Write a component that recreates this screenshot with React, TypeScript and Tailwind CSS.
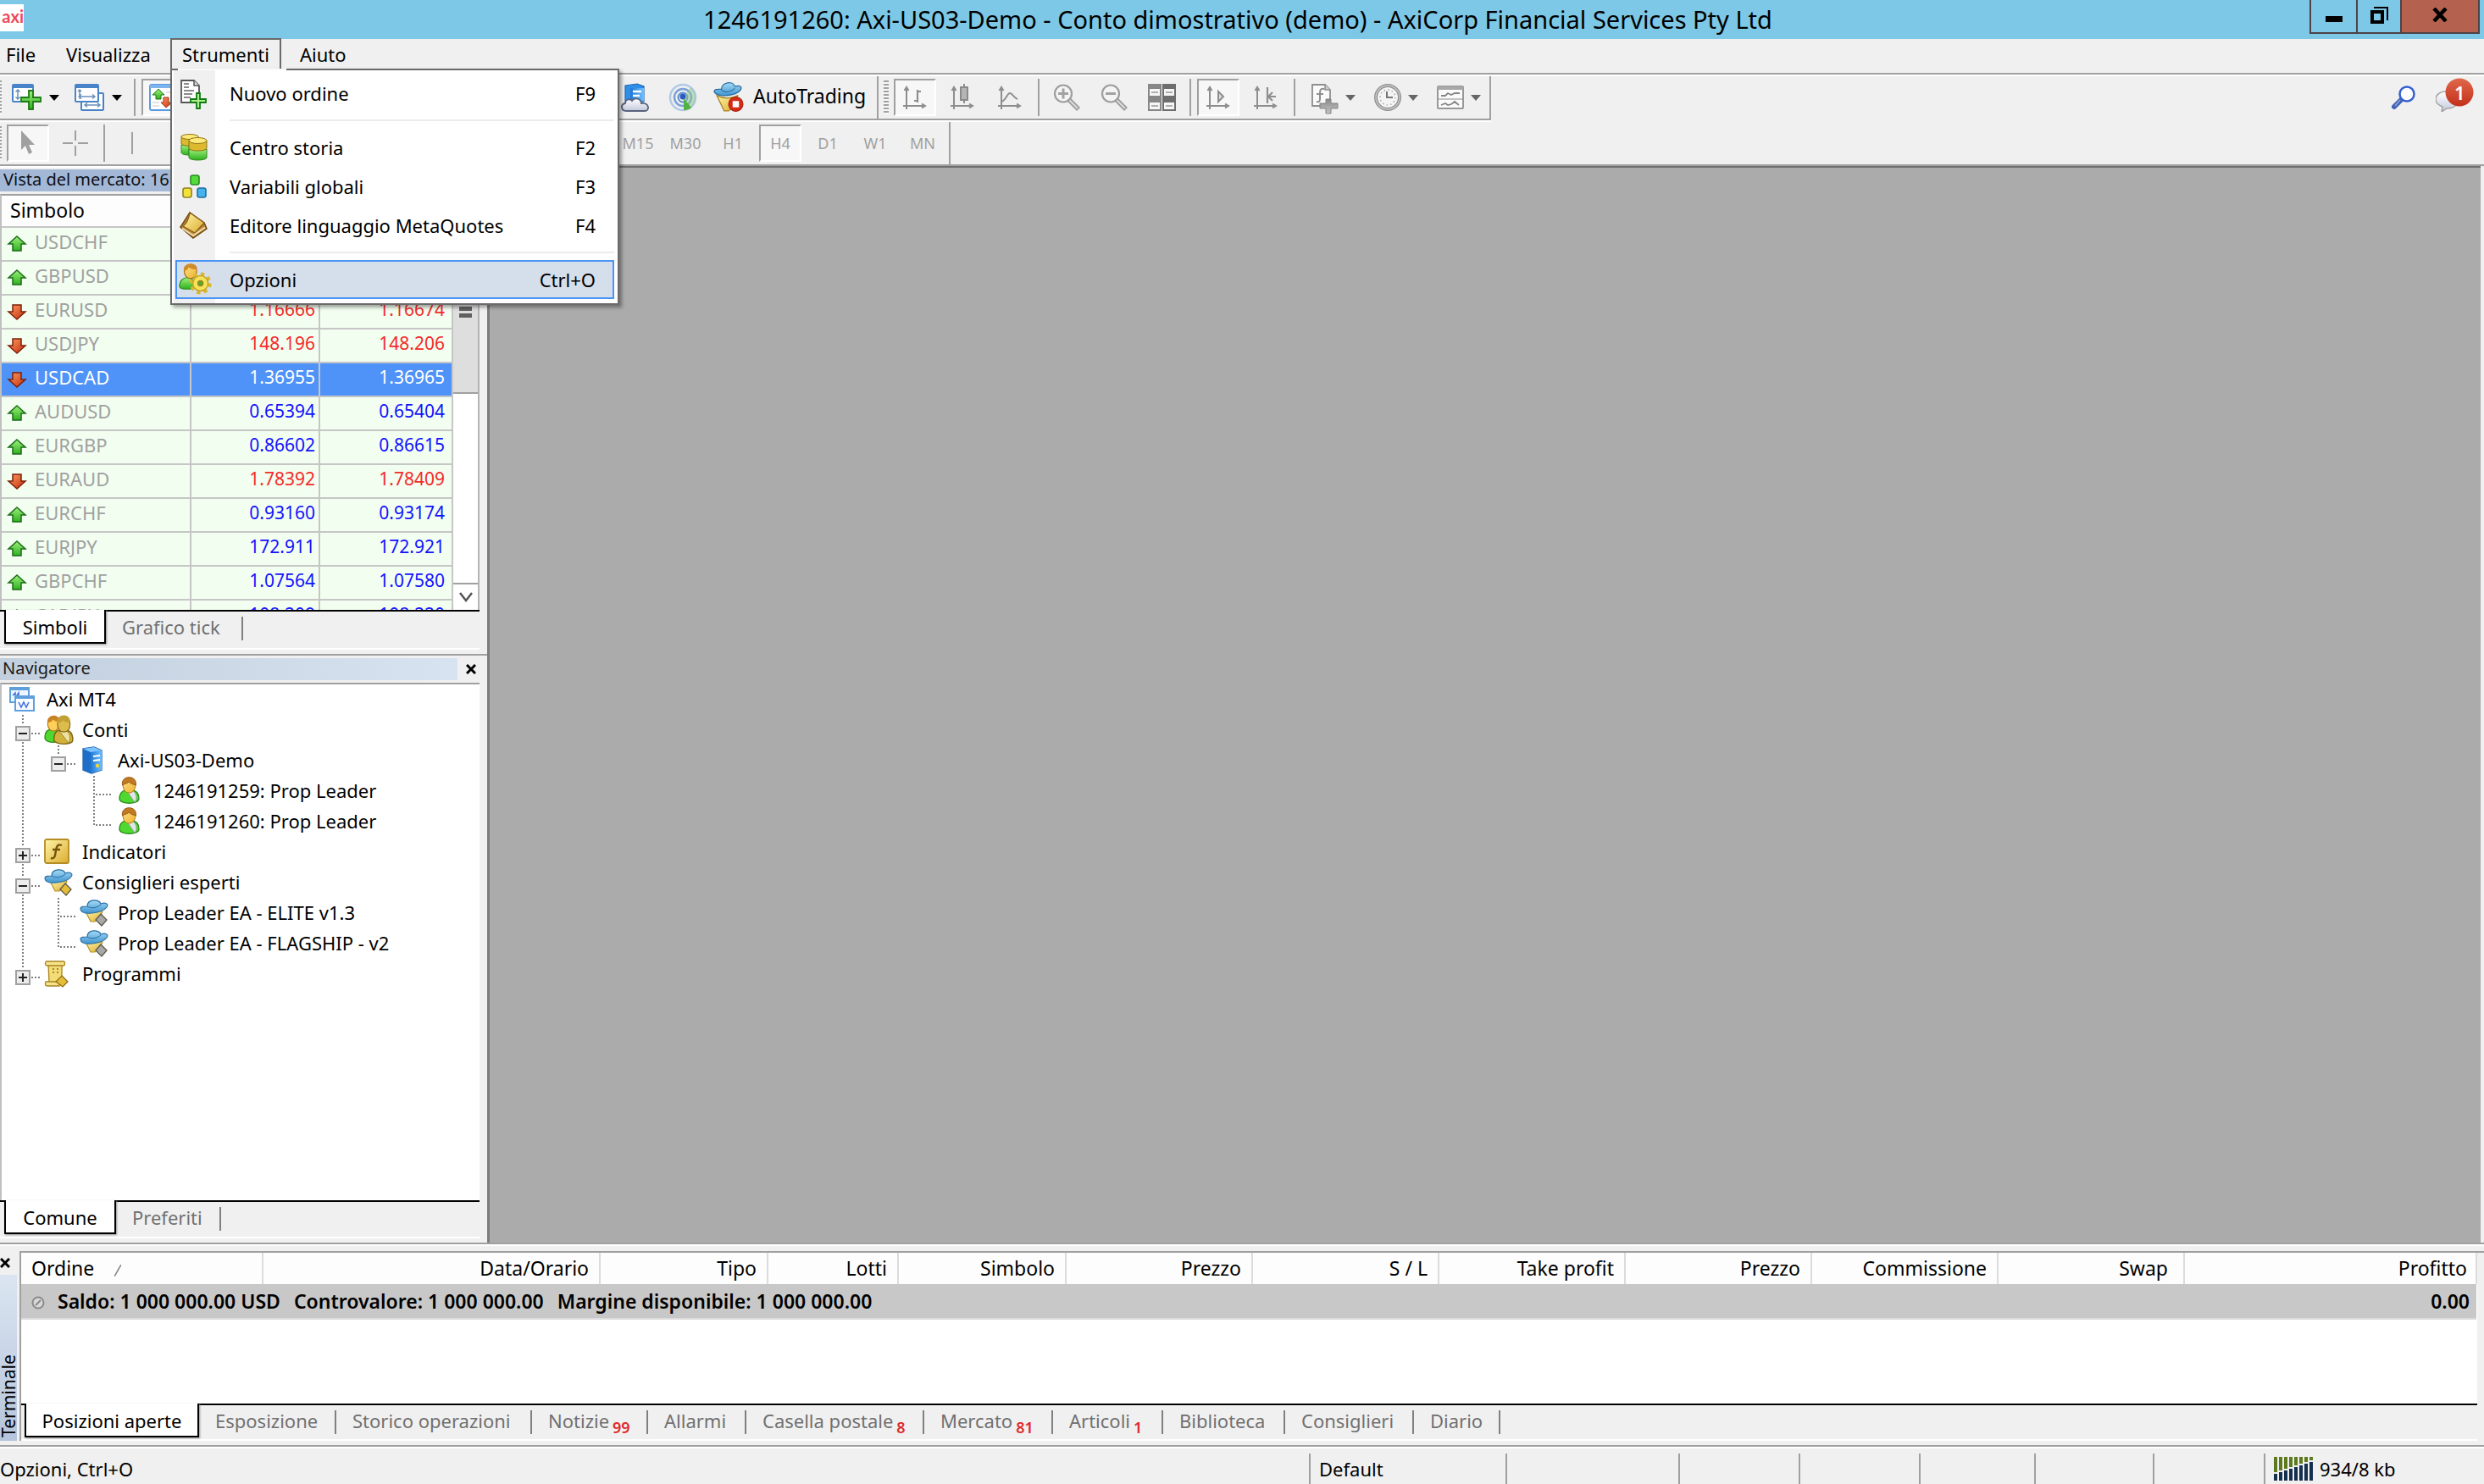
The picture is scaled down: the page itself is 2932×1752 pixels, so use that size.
import type { ReactNode } from "react";

/* ---------- icons ---------- */

function Icon({ children, className = "size-8" }: { children: ReactNode; className?: string }) {
  return (
    <svg viewBox="0 0 32 32" className={`${className} shrink-0 overflow-visible`} aria-hidden="true">
      {children}
    </svg>
  );
}

function Gradients() {
  return (
    <svg className="absolute size-0" aria-hidden="true">
      <defs>
        <linearGradient id="green" x1="0" y1="0" x2="0" y2="1">
          <stop offset="0" stopColor="#9cf07c" />
          <stop offset="1" stopColor="#2fb01f" />
        </linearGradient>
        <linearGradient id="red" x1="0" y1="0" x2="1" y2="1">
          <stop offset="0" stopColor="#ff9a63" />
          <stop offset="1" stopColor="#c22f0c" />
        </linearGradient>
        <linearGradient id="gold" x1="0" y1="0" x2="1" y2="1">
          <stop offset="0" stopColor="#fff6a8" />
          <stop offset="1" stopColor="#dcab30" />
        </linearGradient>
        <linearGradient id="hat" x1="0" y1="0" x2="0" y2="1">
          <stop offset="0" stopColor="#a5daf6" />
          <stop offset="1" stopColor="#3f94cf" />
        </linearGradient>
        <linearGradient id="blue" x1="0" y1="0" x2="1" y2="0">
          <stop offset="0" stopColor="#1f78d6" />
          <stop offset="1" stopColor="#6fc0ff" />
        </linearGradient>
        <linearGradient id="skin" x1="0" y1="0" x2="1" y2="1">
          <stop offset="0" stopColor="#ffe08a" />
          <stop offset="1" stopColor="#eeb32c" />
        </linearGradient>
        <linearGradient id="gray" x1="0" y1="0" x2="0" y2="1">
          <stop offset="0" stopColor="#8a8a8a" />
          <stop offset="1" stopColor="#c4c4c4" />
        </linearGradient>
        <linearGradient id="cloud" x1="0" y1="0" x2="0" y2="1">
          <stop offset="0" stopColor="#ffffff" />
          <stop offset="1" stopColor="#c3c9dc" />
        </linearGradient>
        <linearGradient id="badge" x1="0" y1="0" x2="0" y2="1">
          <stop offset="0" stopColor="#e0684a" />
          <stop offset="1" stopColor="#c3301a" />
        </linearGradient>
      </defs>
    </svg>
  );
}

const NewChartIcon = () => (
  <Icon className="h-8 w-9">
    <rect x="-1" y="1" width="24" height="20" rx="1" fill="#fff" stroke="#4a84c8" strokeWidth="2" />
    <path d="M-1 3h24" stroke="#4a84c8" strokeWidth="4" />
    <path d="M5 7v11M2.500 9.500 5 7l2.500 2.500M2.500 15.500 5 18l2.500-2.500" stroke="#6c8fba" strokeWidth="1.500" fill="none" />
    <path d="M18 8h5v8h9v5h-9v9h-5v-9H9v-5h9z" fill="url(#green)" stroke="#1d7a16" strokeWidth="1.800" />
  </Icon>
);

const ProfilesIcon = () => (
  <Icon className="h-8 w-9">
    <rect x="6" y="11" width="26" height="20" rx="1" fill="#fff" stroke="#4a84c8" strokeWidth="2" />
    <rect x="-1" y="1" width="27" height="20" rx="1" fill="#fff" stroke="#4a84c8" strokeWidth="2" />
    <path d="M-1 3h27" stroke="#4a84c8" strokeWidth="4" />
    <path d="M4 7v11M2 9l2-2 2 2M3 15h19M19 12.500 22 15l-3 2.500M6 12.500 3 15l3 2.500M10 25h18M13 22.500 10 25l3 2.500M25 22.500 28 25l-3 2.500" stroke="#6c8fba" strokeWidth="1.500" fill="none" />
  </Icon>
);

const MarketWatchIcon = () => (
  <Icon>
    <rect x="1" y="1" width="30" height="30" rx="2" fill="#fff" stroke="#5a9be0" strokeWidth="2" />
    <path d="M1 3h30" stroke="#7db4ee" strokeWidth="4" />
    <path d="M11 6l7 7h-4v5H8v-5H4z" fill="url(#green)" stroke="#1d7a16" />
    <path d="M17 16h6v6h4l-7 6-6-6h3z" fill="url(#red)" stroke="#a63214" />
    <path d="M4 22h8M4 26h8M20 10h7" stroke="#c8c8c8" />
  </Icon>
);

const NewOrderIcon = () => (
  <Icon>
    <path d="M1 1h15l6 6v20H1z" fill="#fff" stroke="#555" strokeWidth="1.800" />
    <path d="M16 1v6h6" fill="#ddd" stroke="#555" strokeWidth="1.500" />
    <path d="M4 5h6M4 9h6M4 13h12M4 17h10M4 21h8" stroke="#666" strokeWidth="1.600" />
    <path d="M19 16h4v7h7v4h-7v7h-4v-7h-7v-4h7z" fill="#a8f08c" stroke="#137a13" strokeWidth="1.800" />
  </Icon>
);

const HistoryIcon = () => (
  <Icon>
    <path d="M1 13v9c0 2 4 3 9 3V13z" fill="url(#green)" stroke="#2f8a1c" />
    <path d="M1 3v9c2 2 6 2 10 2l10-8V3z" fill="#dcb92f" stroke="#8e7416" />
    <ellipse cx="11" cy="3.500" rx="10" ry="3" fill="#ffe978" stroke="#8e7416" />
    <path d="M10 18v10c0 4 21 4 21 0V18z" fill="url(#green)" stroke="#2f8a1c" />
    <path d="M10 8v9c0 4 21 4 21 0V8z" fill="#dcb92f" stroke="#8e7416" />
    <ellipse cx="20.500" cy="8" rx="10.500" ry="3.500" fill="#ffe978" stroke="#8e7416" />
  </Icon>
);

const GlobalsIcon = () => (
  <Icon>
    <rect x="12" y="3" width="10" height="11" rx="2.500" fill="#52dc3a" stroke="#2a8a22" strokeWidth="1.600" />
    <rect x="3" y="18" width="10" height="11" rx="2.500" fill="#f4e23c" stroke="#8e8420" strokeWidth="1.600" />
    <rect x="20" y="18" width="10" height="11" rx="2.500" fill="#45b4ee" stroke="#1f6f9e" strokeWidth="1.600" />
  </Icon>
);

const EditorIcon = () => (
  <Icon>
    <path d="M11 1 0 18l15 13 16-11-3-7z" fill="#b98534" stroke="#70480f" strokeWidth="1.500" />
    <path d="M11 1 28 13 17 25 3 17c4-3 7-9 8-16z" fill="url(#gold)" stroke="#8a5f18" strokeWidth="1.300" />
    <path d="M2 19.500 15 28l14-9.500" fill="none" stroke="#f0dfb0" strokeWidth="2" />
  </Icon>
);

const OptionsIcon = () => (
  <Icon className="size-9">
    <path d="M-1 23c0-6 4-9 8-9s8 2 8 9c0 4-16 4-16 0z" fill="url(#green)" stroke="#2f8a1c" />
    <path d="M4 7c0-9 13-9 13 0 0 5-3 8-6.500 8S4 12 4 7z" fill="url(#skin)" stroke="#a86a10" />
    <path d="M3.500 7C2-3 18-3 17.500 5c-4 1-8-1-9-2-1 3-3 4-5 4z" fill="#d08c28" />
    <circle cx="21" cy="20" r="9.500" fill="none" stroke="#d9b72c" strokeWidth="4" strokeDasharray="3.700 3.760" />
    <circle cx="21" cy="20" r="8" fill="#f7e25c" stroke="#c7a422" strokeWidth="1.300" />
    <circle cx="21" cy="20" r="2.700" fill="#47b034" stroke="#9c8418" strokeWidth="1.200" />
  </Icon>
);

const CloudIcon = () => (
  <Icon>
    <path d="M4 2 18 0l8 3v18H4z" fill="#2f8ee8" stroke="#1b66b8" strokeWidth="1.200" />
    <path d="M10 5h16v15H10z" fill="url(#blue)" />
    <path d="M13 9h10M13 14h8" stroke="#fff" strokeWidth="2.500" />
    <path d="M5 32c-6 0-7-8-1-9 0-5 6-6 8-3 4-5 11-2 11 3 10-1 10 9 4 9z" fill="url(#cloud)" stroke="#59637f" strokeWidth="1.800" />
  </Icon>
);

const SignalIcon = () => (
  <Icon>
    <circle cx="16" cy="16" r="15" fill="none" stroke="#b0c9e4" strokeWidth="2.500" />
    <circle cx="16" cy="16" r="10" fill="none" stroke="#7ba2d8" strokeWidth="2.500" />
    <circle cx="16" cy="16" r="5.500" fill="none" stroke="#5c8ad0" strokeWidth="2" />
    <path d="M17 16 25 4a15 15 0 0 1-8 27z" fill="#8cc58a" opacity="0.500" />
    <path d="M17 17v14c4 0 7-1 9-3z" fill="#4fb33f" />
    <circle cx="16" cy="15" r="3.500" fill="#2a5cc0" />
  </Icon>
);

const AutoTradingIcon = () => (
  <Icon className="size-[34px]">
    <path d="M3 14c8 4 15 4 23 0l-1 9-9 8h-5z" fill="url(#gold)" stroke="#a8841c" strokeWidth="1.200" />
    <path d="M0 10c0-4 5-3 8-3 0-8 13-10 15-3 5-2 9 0 6 4-5 6-24 9-29 2z" fill="url(#hat)" stroke="#2b6fa3" strokeWidth="1.200" />
    <path d="M8 8c4 3 11 2 15-2" fill="none" stroke="#2b6fa3" />
    <circle cx="24" cy="23.500" r="8" fill="#d62c16" stroke="#a31d0c" />
    <rect x="20.500" y="20" width="7" height="7" fill="#fff" />
  </Icon>
);

const Axes = () => <path d="M6 4v26M2 26h26M3.500 8 6 4l2.500 4M24 23.500 28 26l-4 2.500" stroke="#8e8e8e" strokeWidth="2" fill="none" />;

const BarChartIcon = () => (
  <Icon>
    <Axes />
    <path d="M19 7v15M19 9h4M15 20h4" stroke="#8e8e8e" strokeWidth="2.200" fill="none" />
  </Icon>
);
const CandleIcon = () => (
  <Icon>
    <Axes />
    <path d="M18 0v23" stroke="#8e8e8e" strokeWidth="2" />
    <rect x="14" y="4" width="8" height="15" fill="#b5b5b5" stroke="#8a8a8a" strokeWidth="2" />
  </Icon>
);
const LineChartIcon = () => (
  <Icon>
    <Axes />
    <path d="M7 21c5-3 6-10 9-10s4 5 9 7" stroke="#8e8e8e" strokeWidth="2" fill="none" />
  </Icon>
);
const ZoomIcon = ({ plus }: { plus?: boolean }) => (
  <Icon>
    <path d="M18 18 30 30" stroke="#9b9b9b" strokeWidth="5.500" />
    <path d="M19 19 29 29" stroke="#dcdcdc" strokeWidth="2" />
    <circle cx="12" cy="11.500" r="10" fill="#f4f4f4" stroke="#9e9e9e" strokeWidth="2.200" />
    <path d={plus ? "M6 11.500h12M12 5.500v12" : "M6 11.500h12"} stroke="#a2a2a2" strokeWidth="3" />
  </Icon>
);
const TileIcon = () => (
  <Icon>
    {[0, 16].map((y) =>
      [0, 17].map((x) => (
        <g key={`${x}-${y}`}>
          <rect x={x} y={y} width="16" height="16" fill={x ? "#6e6e6e" : "#878787"} />
          <rect x={x + 2} y={y + 6} width="12" height="8" fill="#f6f6f6" />
          <path d={`M${x + 4} ${y + 10}h8`} stroke="#999" strokeWidth="1.500" />
        </g>
      )),
    )}
  </Icon>
);
const AutoScrollIcon = () => (
  <Icon>
    <Axes />
    <path d="M16 9v12l6-6z" stroke="#8e8e8e" strokeWidth="2" fill="#ddd" />
  </Icon>
);
const ShiftIcon = () => (
  <Icon>
    <Axes />
    <path d="M18 4v19M28 15h-9M24 10l-5 5 5 5" stroke="#8e8e8e" strokeWidth="2.200" fill="none" />
  </Icon>
);
const IndicatorAddIcon = () => (
  <Icon>
    <path d="M1 1h15l6 6v19H1z" fill="#fafafa" stroke="#8e8e8e" strokeWidth="1.800" />
    <path d="M16 1v6h6" fill="#ccc" stroke="#8e8e8e" strokeWidth="1.500" />
    <path d="M15 6c-5-1-5 2-5 6v6c0 3-1 4-4 3M6 12h8" stroke="#8e8e8e" strokeWidth="2" fill="none" />
    <path d="M17 18h6v5h8v6h-8v6h-6v-6h-7v-6h7z" fill="url(#gray)" stroke="#858585" />
  </Icon>
);
const ClockIcon = () => (
  <Icon>
    <circle cx="16" cy="16" r="14" fill="#f4f4f4" stroke="#8e8e8e" strokeWidth="4" />
    <circle cx="16" cy="16" r="14" fill="none" stroke="#c6c6c6" strokeWidth="1.500" />
    <circle cx="16" cy="16" r="9" fill="none" stroke="#aaa" strokeWidth="1.500" strokeDasharray="1.500 3.200" />
    <path d="M15 9v7h7" stroke="#777" strokeWidth="2" fill="none" />
  </Icon>
);
const TemplateIcon = () => (
  <Icon>
    <rect x="1" y="3" width="30" height="26" rx="1" fill="#fafafa" stroke="#989898" strokeWidth="2" />
    <path d="M1 5h30" stroke="#a8a8a8" strokeWidth="4" />
    <path d="M2 18h28" stroke="#b0b0b0" strokeWidth="1.500" />
    <path d="M5 14h5l3-3 4 2 4-2h6M5 25l5-2 3 2 4-1 4-3 5 4" stroke="#858585" strokeWidth="1.800" fill="none" />
  </Icon>
);

const TerminalWindowsIcon = () => (
  <Icon>
    <rect x="1" y="2" width="22" height="17" fill="#eef6ff" stroke="#5fa0dc" strokeWidth="2" />
    <path d="M1 3h22" stroke="#5fa0dc" strokeWidth="4" />
    <path d="M4 11l3-3v6l4-6v5" stroke="#3e6fe0" strokeWidth="1.500" fill="none" />
    <rect x="7" y="12" width="22" height="17" fill="#f8fbff" stroke="#5fa0dc" strokeWidth="2" />
    <path d="M7 13h22" stroke="#5fa0dc" strokeWidth="4" />
    <path d="M11 19l3 6 3-6 3 6 3-6" stroke="#3e6fe0" strokeWidth="1.500" fill="none" />
  </Icon>
);
const PersonIcon = () => (
  <Icon>
    <path d="M4 25c0-7 4-10 8-10h6c5 0 9 3 9 10 0 7-23 7-23 0z" fill="#4fd82f" stroke="#2a8f1c" strokeWidth="1.300" />
    <path d="M13 16l9 13c4-4 1-12-2-13z" fill="#e4e4ec" stroke="#9a9aa6" strokeWidth="0.800" />
    <path d="M8 8c0-9 15-9 15 0 0 6-3 10-7.500 10S8 14 8 8z" fill="url(#skin)" stroke="#b57a14" />
    <path d="M7.500 9C5-3 25-4 23.500 9 20 8 17 7 15 5c-1 2-5 2-7.500 4z" fill="#c27a22" stroke="#8a4f10" strokeWidth="0.800" />
  </Icon>
);
const PeopleIcon = () => (
  <Icon className="size-[34px]">
    <path d="M0 24c0-6 3-9 8-9h5v14c-6 1-13 0-13-5z" fill="#4fd82f" stroke="#2a8f1c" strokeWidth="1.300" />
    <path d="M3 8c0-9 13-9 13 0 0 6-3 9-6.500 9S3 14 3 8z" fill="#ffcf5a" stroke="#b5760f" />
    <path d="M3 8C1-2 17-3 16 6 12 7 11 6 9 4 8 7 5 7 3 8z" fill="#c98222" />
    <path d="M10 26c0-7 3-10 8-10h4c6 0 9 4 9 11 0 6-21 6-21-1z" fill="#d3b23c" stroke="#806610" strokeWidth="1.300" />
    <path d="M16 17l10 13c4-4 1-12-2-13z" fill="#efe0a0" stroke="#927a20" strokeWidth="0.800" />
    <path d="M14 9c0-10 14-10 14 0 0 6-3 9-7 9s-7-3-7-9z" fill="#dcbc4c" stroke="#806610" />
    <path d="M14 8C12-3 29-3 28 7c-4 1-6 0-8-2-1 2-4 3-6 3z" fill="#c3a034" />
  </Icon>
);
const ServerIcon = () => (
  <Icon>
    <path d="M3 2 16 0l9 4v23l-12 4L3 27z" fill="#2c86df" stroke="#1a5fa8" strokeWidth="1.300" />
    <path d="M3 2l9 4v25L3 27z" fill="#1f6fc8" />
    <path d="M12 6l13-2v23l-13 4z" fill="url(#blue)" />
    <path d="M3 2 16 0l9 4-13 2z" fill="#7cc2ff" />
    <path d="M15 11l8-1M15 16l8-1" stroke="#fff" strokeWidth="2.200" />
    <circle cx="20" cy="22" r="2.200" fill="#f2d53c" />
  </Icon>
);
const FunctionIcon = () => (
  <Icon>
    <rect x="0" y="1" width="28" height="28" rx="2" fill="url(#gold)" stroke="#b48c22" strokeWidth="1.800" />
    <path d="M20 8c-5-2-6 1-7 6l-1 6c-1 3-2 4-5 3M9 13h9" stroke="#75550c" strokeWidth="2.400" fill="none" />
  </Icon>
);
const ExpertIcon = ({ diamond }: { diamond: string }) => (
  <Icon>
    <path d="M6 14h20l-3 7-6 5h-5z" fill="url(#gold)" stroke="#b3922a" strokeWidth="1.200" />
    <path d="M0 11c0-3 4-3 8-3 0-9 14-9 16-3 5-2 10 0 7 4-5 7-30 11-31 2z" fill="url(#hat)" stroke="#2b6fa3" strokeWidth="1.200" />
    <path d="M8 8c5 3 11 2 16-2" fill="none" stroke="#2b6fa3" />
    <path d="M24 17l7 7-6 7-7-7z" fill={diamond} stroke="#5e5a48" strokeWidth="1.300" />
  </Icon>
);
const ScriptIcon = () => (
  <Icon>
    <path d="M4 4h16v22H5z" fill="#f3dc74" stroke="#a88520" strokeWidth="1.300" />
    <path d="M2 1h20c2 0 2 5 0 5H2c-2 0-2-5 0-5zM1 25h16v5H3c-3 0-3-3-2-5z" fill="#f7e38a" stroke="#a88520" strokeWidth="1.300" />
    <path d="M9 10h2M14 10h2M9 14h2M14 14h2" stroke="#8a6c18" strokeWidth="1.600" />
    <path d="M20 18l7 7-6 6-8-6z" fill="#e6bd38" stroke="#8a6c18" strokeWidth="1.200" />
  </Icon>
);
const Arrow = ({ up }: { up: boolean }) =>
  up ? (
    <svg viewBox="0 0 22 20" className="h-5 w-[22px] shrink-0 overflow-visible" aria-label="su">
      <path d="M11 1l10 9h-5v8H6v-8H1z" fill="url(#green)" stroke="#1d6a18" strokeWidth="1.500" />
    </svg>
  ) : (
    <svg viewBox="0 0 22 20" className="h-5 w-[22px] shrink-0 overflow-visible" aria-label="giù">
      <path d="M11 19 1 10h5V2h10v8h5z" fill="url(#red)" stroke="#7e1f08" strokeWidth="1.500" />
    </svg>
  );

/* ---------- toolbar parts ---------- */

const Grip = ({ narrow }: { narrow?: boolean }) => (
  <span
    className={`${narrow ? "w-[2px]" : "w-[6px]"} h-10 shrink-0 bg-[repeating-linear-gradient(to_bottom,#a0a0a0_0_2px,#f8f8f8_2px_4px)]`}
  />
);

const Divider = () => (
  <span className="flex h-11 w-[5px] shrink-0 justify-center">
    <span className="w-[2px] bg-[#a0a0a0]" />
  </span>
);

const GroupEnd = () => <span className="w-[2px] shrink-0 self-stretch bg-[#a0a0a0]" />;

function Tool({ label, pressed, children }: { label: string; pressed?: boolean; children: ReactNode }) {
  return (
    <button
      type="button"
      aria-label={label}
      aria-pressed={pressed}
      className={`flex h-11 w-[50px] shrink-0 items-center justify-center border-2 text-[18px] text-[#a0a0a0] ${
        pressed ? "border-t-[#a0a0a0] border-r-white border-b-white border-l-[#a0a0a0] bg-[#f7f7f7]" : "border-transparent"
      }`}
    >
      {children}
    </button>
  );
}

function DropTool({ label, dark, children }: { label: string; dark?: boolean; children: ReactNode }) {
  return (
    <button
      type="button"
      aria-label={label}
      aria-haspopup="menu"
      className={`flex h-11 w-[68px] shrink-0 items-center gap-2 ${dark ? "pl-1.5" : "pl-3"}`}
    >
      {children}
      <svg viewBox="0 0 12 7" className="h-[7px] w-3 shrink-0" aria-hidden="true">
        <path d="M0 0h12L6 7z" fill={dark ? "#000" : "#666"} />
      </svg>
    </button>
  );
}

/* ---------- data ---------- */

const quotes: { symbol: string; up: boolean; bid?: string; ask?: string; selected?: boolean }[] = [
  { symbol: "USDCHF", up: true },
  { symbol: "GBPUSD", up: true },
  { symbol: "EURUSD", up: false, bid: "1.16666", ask: "1.16674" },
  { symbol: "USDJPY", up: false, bid: "148.196", ask: "148.206" },
  { symbol: "USDCAD", up: false, bid: "1.36955", ask: "1.36965", selected: true },
  { symbol: "AUDUSD", up: true, bid: "0.65394", ask: "0.65404" },
  { symbol: "EURGBP", up: true, bid: "0.86602", ask: "0.86615" },
  { symbol: "EURAUD", up: false, bid: "1.78392", ask: "1.78409" },
  { symbol: "EURCHF", up: true, bid: "0.93160", ask: "0.93174" },
  { symbol: "EURJPY", up: true, bid: "172.911", ask: "172.921" },
  { symbol: "GBPCHF", up: true, bid: "1.07564", ask: "1.07580" },
  { symbol: "CADJPY", up: true, bid: "108.209", ask: "108.220" },
];

type Guide = "none" | "line" | "tee" | "end" | "minus" | "minusEnd" | "plus" | "plusEnd";

const tree: { guides: Guide[]; icon: ReactNode; label: string }[] = [
  { guides: [], icon: <TerminalWindowsIcon />, label: "Axi MT4" },
  { guides: ["minus"], icon: <PeopleIcon />, label: "Conti" },
  { guides: ["line", "minusEnd"], icon: <ServerIcon />, label: "Axi-US03-Demo" },
  { guides: ["line", "none", "tee"], icon: <PersonIcon />, label: "1246191259: Prop Leader" },
  { guides: ["line", "none", "end"], icon: <PersonIcon />, label: "1246191260: Prop Leader" },
  { guides: ["plus"], icon: <FunctionIcon />, label: "Indicatori" },
  { guides: ["minus"], icon: <ExpertIcon diamond="#e6bd38" />, label: "Consiglieri esperti" },
  { guides: ["line", "tee"], icon: <ExpertIcon diamond="#a8a8a8" />, label: "Prop Leader EA - ELITE v1.3" },
  { guides: ["line", "end"], icon: <ExpertIcon diamond="#a8a8a8" />, label: "Prop Leader EA - FLAGSHIP - v2" },
  { guides: ["plusEnd"], icon: <ScriptIcon />, label: "Programmi" },
];

function TreeGuide({ kind }: { kind: Guide }) {
  if (kind === "none") return <span className="w-[42px] shrink-0" />;
  const box = kind.startsWith("minus") || kind.startsWith("plus");
  const last = kind.toLowerCase().endsWith("end");
  const drawing = (
    <svg viewBox="0 0 42 36" className="h-9 w-[42px]" aria-hidden="true">
      <path d={last ? "M21 0v22" : "M21 0v36"} stroke="#808080" strokeWidth="2" strokeDasharray="2 2" />
      {kind !== "line" && <path d="M23 22h19" stroke="#808080" strokeWidth="2" strokeDasharray="2 2" />}
      {box && (
        <>
          <rect x="11" y="12" width="20" height="20" fill="#fff" />
          <rect x="13" y="14" width="16" height="16" fill="#ececec" stroke="#a0a0a0" strokeWidth="2" />
          <path d={kind.startsWith("plus") ? "M16 22h10M21 17v10" : "M16 22h10"} stroke="#222" strokeWidth="2" />
        </>
      )}
    </svg>
  );
  return box ? (
    <button type="button" aria-label={kind.startsWith("plus") ? "Espandi" : "Comprimi"} className="shrink-0">
      {drawing}
    </button>
  ) : (
    <span className="shrink-0">{drawing}</span>
  );
}

const columns = [
  { name: "Ordine", col: "w-[285px] pr-3" },
  { name: "Data/Orario", col: "w-[398px] pr-3" },
  { name: "Tipo", col: "w-[198px] pr-3" },
  { name: "Lotti", col: "w-[154px] pr-3" },
  { name: "Simbolo", col: "w-[198px] pr-3" },
  { name: "Prezzo", col: "w-[220px] pr-3" },
  { name: "S / L", col: "w-[220px] pr-3" },
  { name: "Take profit", col: "w-[220px] pr-3" },
  { name: "Prezzo", col: "w-[220px] pr-3" },
  { name: "Commissione", col: "w-[220px] pr-3" },
  { name: "Swap", col: "w-[220px] pr-[18px]" },
  { name: "Profitto", col: "pr-2.5" },
];

const terminalTabs = [
  { name: "Esposizione", width: "w-[162px]" },
  { name: "Storico operazioni", width: "w-[231px]" },
  { name: "Notizie", width: "w-[137px]", count: "99" },
  { name: "Allarmi", width: "w-[116px]" },
  { name: "Casella postale", width: "w-[210px]", count: "8" },
  { name: "Mercato", width: "w-[152px]", count: "81" },
  { name: "Articoli", width: "w-[130px]", count: "1" },
  { name: "Biblioteca", width: "w-[144px]" },
  { name: "Consiglieri", width: "w-[152px]" },
  { name: "Diario", width: "w-[102px]" },
];

const menu = [
  { icon: <NewOrderIcon />, label: "Nuovo ordine", keys: "F9" },
  null,
  { icon: <HistoryIcon />, label: "Centro storia", keys: "F2" },
  { icon: <GlobalsIcon />, label: "Variabili globali", keys: "F3" },
  { icon: <EditorIcon />, label: "Editore linguaggio MetaQuotes", keys: "F4" },
  null,
  { icon: <OptionsIcon />, label: "Opzioni", keys: "Ctrl+O", active: true },
];

/* ---------- shared pieces ---------- */

function ActiveTab({ children, className }: { children: ReactNode; className: string }) {
  return (
    <button
      type="button"
      role="tab"
      aria-selected="true"
      className={`-mt-[2px] h-10 shrink-0 border-2 border-t-0 border-black bg-white pt-0.5 text-center whitespace-nowrap shadow-[1px_1px_2px_#909090] ${className}`}
    >
      {children}
    </button>
  );
}

function IdleTab({ name, count, className }: { name: string; count?: string; className: string }) {
  return (
    <button
      type="button"
      role="tab"
      aria-selected="false"
      className={`mt-1.5 flex h-7 shrink-0 items-center border-r-2 border-[#808080] pl-[19px] whitespace-nowrap text-[#707070] ${className}`}
    >
      <span className="-mt-1">{name}</span>
      {count && <span className="mt-3 ml-1 text-[18px] font-semibold text-[#e02a2a]">{count}</span>}
    </button>
  );
}

const CloseGlyph = () => (
  <svg viewBox="0 0 12 12" className="size-3" aria-hidden="true">
    <path d="M1 1l10 10M11 1 1 11" stroke="#000" strokeWidth="3" />
  </svg>
);

/* ---------- regions ---------- */

function TitleBar() {
  return (
    <header className="grid h-[46px] shrink-0 grid-cols-[1fr_auto_1fr] items-start bg-[#7dc8e6]">
      <span className="mt-[5px] flex h-8 w-7 items-center justify-end overflow-hidden bg-white pb-1 font-['Lato'] text-[20px] font-bold text-[#f0485a]">
        axi
      </span>
      <h1 className="pr-2.5 text-[29px] leading-[46px] text-black">
        1246191260: Axi-US03-Demo - Conto dimostrativo (demo) - AxiCorp Financial Services Pty Ltd
      </h1>
      <div className="mr-[5px] flex h-10 justify-self-end border-2 border-t-0 border-[#4d4346]">
        <button type="button" aria-label="Riduci a icona" className="flex w-[55px] justify-center border-r-2 border-[#4d4346] pt-[19px]">
          <span className="h-[7px] w-5 bg-black" />
        </button>
        <button type="button" aria-label="Ripristina" className="flex w-[52px] justify-center border-r-2 border-[#4d4346] pt-2">
          <svg viewBox="0 0 21 20" className="h-5 w-[21px]" aria-hidden="true">
            <rect x="2" y="6" width="12" height="12" fill="none" stroke="#000" strokeWidth="4" />
            <path d="M4 1h16v15" fill="none" stroke="#000" strokeWidth="2" />
          </svg>
        </button>
        <button type="button" aria-label="Chiudi" className="flex w-[90px] justify-center bg-[#b5614f] pt-[9px]">
          <svg viewBox="0 0 18 17" className="h-[17px] w-[18px]" aria-hidden="true">
            <path d="M2 1l14 15M16 1 2 16" stroke="#000" strokeWidth="4.500" />
          </svg>
        </button>
      </div>
    </header>
  );
}

function MenuBar() {
  return (
    <nav className="relative z-10 flex h-10 shrink-0 items-start">
      <button type="button" className="h-9 w-[61px] pl-[7px] text-left">File</button>
      <button type="button" className="h-9 w-[140px] pl-[17px] text-left">Visualizza</button>
      <div className="relative -mt-px">
        <button
          type="button"
          aria-expanded="true"
          aria-haspopup="menu"
          className="h-[37px] w-[131px] border-2 border-b-0 border-[#6a6a6a] bg-[#f0f0f0]"
        >
          Strumenti
        </button>
        <div
          role="menu"
          className="absolute top-9 left-0 w-[530px] border-2 border-[#6a6a6a] bg-[linear-gradient(to_right,#fff_2px,#f0f0f0_2px,#f0f0f0_51px,#fff_51px)] px-1 pt-1 pb-[5px] shadow-[3px_3px_4px_rgba(0,0,0,0.35)]"
        >
          <span className="absolute -top-[2px] left-[7px] h-[2px] w-[128px] bg-[#fafafa]" />
          {menu.map((item, i) =>
            item ? (
              <button
                key={item.label}
                type="button"
                role="menuitem"
                className={`flex h-[46px] w-full items-center border-2 pr-5 ${
                  item.active ? "border-[#4a94f7] bg-[#d5deeb]" : "border-transparent"
                }`}
              >
                <span className="flex w-[62px] shrink-0 pl-1">{item.icon}</span>
                <span>{item.label}</span>
                <span className="ml-auto">{item.keys}</span>
              </button>
            ) : (
              <div key={i} role="separator" className="flex h-[18px] items-center pl-16">
                <span className="h-[2px] w-full bg-[#ececec]" />
              </div>
            ),
          )}
        </div>
      </div>
      <button type="button" className="h-9 pl-[22px]">Aiuto</button>
    </nav>
  );
}

function Toolbars() {
  return (
    <div className="relative flex h-[108px] shrink-0 justify-between border-t-2 border-[#a0a0a0]">
      <div className="w-full border-t-2 border-white">
        <div className="flex">
          <div className="flex h-[52px] items-center gap-1.5 border-r-2 border-b-2 border-[#a0a0a0] pr-1.5 shadow-[0_2px_0_#fff]">
            <Grip narrow />
            <DropTool label="Nuovo grafico" dark><NewChartIcon /></DropTool>
            <DropTool label="Profili" dark><ProfilesIcon /></DropTool>
            <Divider />
            <Tool label="Vista del mercato" pressed><MarketWatchIcon /></Tool>
            <span className="w-[496px] shrink-0" />
            <Tool label="Hosting virtuale"><CloudIcon /></Tool>
            <Tool label="Segnali"><SignalIcon /></Tool>
            <button type="button" className="flex h-11 w-[192px] shrink-0 items-center gap-3 pl-1.5 text-[23px]">
              <AutoTradingIcon />
              <span className="-mt-1">AutoTrading</span>
            </button>
            <GroupEnd />
            <Grip />
            <Tool label="Grafico a barre" pressed><BarChartIcon /></Tool>
            <Tool label="Candele"><CandleIcon /></Tool>
            <Tool label="Grafico a linea"><LineChartIcon /></Tool>
            <Divider />
            <Tool label="Ingrandisci"><ZoomIcon plus /></Tool>
            <Tool label="Riduci"><ZoomIcon /></Tool>
            <Tool label="Affianca finestre"><TileIcon /></Tool>
            <Divider />
            <Tool label="Scorrimento automatico" pressed><AutoScrollIcon /></Tool>
            <Tool label="Spostamento grafico"><ShiftIcon /></Tool>
            <Divider />
            <DropTool label="Indicatori"><IndicatorAddIcon /></DropTool>
            <DropTool label="Periodi"><ClockIcon /></DropTool>
            <DropTool label="Modelli"><TemplateIcon /></DropTool>
          </div>
        </div>
        <div className="mt-0.5 flex h-[50px] items-center gap-1.5">
          <Grip narrow />
          <Tool label="Cursore" pressed>
            <svg viewBox="0 0 18 30" className="h-[30px] w-[18px]" aria-hidden="true">
              <path d="M1 0v23l5-5 4 10 4-2-4-9h7z" fill="#a0a0a0" />
            </svg>
          </Tool>
          <Tool label="Mirino">
            <svg viewBox="0 0 30 30" className="size-[30px]" aria-hidden="true">
              <path d="M0 15h12M18 15h12M15 0v12M15 18v12" stroke="#a0a0a0" strokeWidth="2" />
            </svg>
          </Tool>
          <Divider />
          <Tool label="Linea verticale"><span className="h-[26px] w-[2px] bg-[#a0a0a0]" /></Tool>
          <span className="w-[535px] shrink-0" />
          {["M15", "M30", "H1", "H4", "D1", "W1", "MN"].map((t) => (
            <Tool key={t} label={t} pressed={t === "H4"}>{t}</Tool>
          ))}
          <GroupEnd />
        </div>
      </div>
      <div className="absolute top-1 right-3 flex items-start gap-6">
        <button type="button" aria-label="Cerca" className="mt-[9px]">
          <svg viewBox="0 0 28 28" className="size-7 overflow-visible" aria-hidden="true">
            <path d="M12 16 3 25" stroke="#3f63b4" strokeWidth="6" strokeLinecap="round" />
            <path d="M10 17 4 24" stroke="#8fa8dc" strokeWidth="1.500" />
            <circle cx="18" cy="10" r="8.500" fill="#fdfdff" stroke="#3560d0" strokeWidth="2.500" />
          </svg>
        </button>
        <button type="button" aria-label="Messaggi" className="relative h-10 w-[45px]">
          <svg viewBox="0 0 45 40" className="h-10 w-[45px]" aria-hidden="true">
            <path d="M12 16c7 0 14 3 14 10s-6 10-13 10l-6 4 1-6c-3-1-8-4-8-9s5-9 12-9z" fill="url(#cloud)" stroke="#a0a0a0" strokeWidth="1.500" />
            <circle cx="28" cy="17" r="16.500" fill="url(#badge)" />
          </svg>
          <span className="absolute top-[3px] left-[22px] text-[22px] leading-7 font-semibold text-white">1</span>
        </button>
      </div>
    </div>
  );
}

function MarketWatch() {
  return (
    <section className="border-b-2 border-[#a0a0a0] pt-[2px]">
      <h2 className="mb-[3px] h-[26px] w-[540px] bg-[#a3b8d6] pl-1 text-[20px] leading-6 text-[#0c1018]">Vista del mercato: 16</h2>
      <div className="mr-[9px] flex h-[491px] overflow-hidden border-t-2 border-l-2 border-[#a0a0a0] border-l-[#c0c0c0]">
        <table className="h-fit w-[532px] shrink-0 table-fixed border-collapse">
          <thead>
            <tr className="h-[37px] bg-[#fdfdfd]">
              <th scope="col" className="w-[223px] pb-0.5 pl-2.5 text-left text-[23px] leading-none font-normal">Simbolo</th>
              <th scope="col" aria-label="Bid" className="w-[152px]" />
              <th scope="col" aria-label="Ask" className="w-[157px]" />
            </tr>
          </thead>
          <tbody>
            {quotes.map((q) => {
              const color = q.selected ? "text-white" : q.up ? "text-[#1212ff]" : "text-[#f52a2a]";
              return (
                <tr key={q.symbol} className={`h-10 border-t-2 border-[#c6c6c6] ${q.selected ? "bg-[#4f93f8]" : "bg-[#f2fef0]"}`}>
                  <td className="border-r-2 border-[#c6c6c6] p-0">
                    <div className="flex items-center gap-[10px] pl-[7px]">
                      <Arrow up={q.up} />
                      <span className={`-mt-1.5 leading-8 ${q.selected ? "text-white" : "text-[#a0a0a0]"}`}>{q.symbol}</span>
                    </div>
                  </td>
                  <td className={`border-r-2 border-[#c6c6c6] p-0 pr-1 pb-1.5 text-right text-[21px] leading-none ${color}`}>{q.bid}</td>
                  <td className={`border-r-2 border-[#c6c6c6] p-0 pr-2 pb-1.5 text-right text-[21px] leading-none ${color}`}>{q.ask}</td>
                </tr>
              );
            })}
          </tbody>
        </table>
        <div className="flex flex-1 flex-col border-r-2 border-[#b4b4b4] bg-white">
          <div className="flex h-[234px] shrink-0 flex-col items-center gap-[3px] border-b-2 border-[#a0a0a0] bg-[#dedede] pt-[131px]">
            <span className="h-[5px] w-[15px] bg-[#606060]" />
            <span className="h-[5px] w-[15px] bg-[#606060]" />
          </div>
          <div className="flex-1" />
          <button type="button" aria-label="Scorri in basso" className="flex h-8 items-center justify-center border-t-2 border-[#a0a0a0]">
            <svg viewBox="0 0 16 12" className="h-3 w-4" aria-hidden="true">
              <path d="M1 1l7 9 7-9" fill="none" stroke="#555" strokeWidth="2.500" />
            </svg>
          </button>
        </div>
      </div>
      <div role="tablist" className="mr-[9px] mb-[5px] flex h-[47px] border-t-2 border-b-2 border-t-black border-b-white pl-[5px]">
        <ActiveTab className="w-[120px]">Simboli</ActiveTab>
        <IdleTab name="Grafico tick" className="w-[162px]" />
      </div>
    </section>
  );
}

function Navigator() {
  return (
    <section className="flex min-h-0 flex-1 flex-col pt-[3px]">
      <div className="mb-[3px] flex h-[26px] shrink-0 items-center">
        <h2 className="h-full w-[540px] bg-linear-to-r from-[#c2cfde] to-[#d7e3f0] pl-[3px] text-[20px] leading-6 text-[#1a1a1a]">Navigatore</h2>
        <button type="button" aria-label="Chiudi navigatore" className="ml-2.5"><CloseGlyph /></button>
      </div>
      <ul role="tree" className="mr-[9px] min-h-0 flex-1 border-t-2 border-l-2 border-[#a0a0a0] border-l-[#c0c0c0] bg-white pl-1">
        {tree.map((row) => (
          <li key={row.label} role="treeitem" className="flex h-9 items-center">
            {row.guides.map((g, i) => (
              <TreeGuide key={i} kind={g} />
            ))}
            <span className="flex w-[49px] shrink-0 pl-[5px]">{row.icon}</span>
            <span className="-mt-0.5 whitespace-nowrap">{row.label}</span>
          </li>
        ))}
      </ul>
      <div role="tablist" className="mr-[9px] mb-[5px] flex h-[45px] shrink-0 border-t-2 border-b-2 border-t-black border-b-white pl-[5px]">
        <ActiveTab className="w-[132px]">Comune</ActiveTab>
        <IdleTab name="Preferiti" className="w-[124px]" />
      </div>
    </section>
  );
}

function Terminal() {
  return (
    <section className="flex shrink-0 border-t-2 border-b-2 border-t-white border-b-[#a0a0a0] pt-1.5 pb-[5px]">
      <div className="flex w-[23px] shrink-0 flex-col">
        <button type="button" aria-label="Chiudi terminale" className="flex h-7 shrink-0 items-center"><CloseGlyph /></button>
        <h2 className="w-5 flex-1 rotate-180 overflow-hidden bg-linear-to-t from-[#dbe5f1] to-[#b6c5dc] pt-1 text-[21px] leading-5 [writing-mode:vertical-rl]">
          Terminale
        </h2>
      </div>
      <div className="min-w-0 flex-1 border-t-2 border-l-2 border-[#a0a0a0]">
        <div className="mr-2 bg-white">
          <table className="w-full table-fixed border-collapse">
            <thead>
              <tr className="h-[37px] bg-[#fdfdfd]">
                {columns.map((c, i) => (
                  <th
                    key={i}
                    scope="col"
                    className={`border-r-2 border-[#dcdcdc] py-0 pl-3 text-[23px] leading-none font-normal whitespace-nowrap ${c.col} ${i ? "text-right" : "text-left"}`}
                  >
                    {c.name}
                    {i === 0 && (
                      <svg viewBox="0 0 8 14" className="ml-6 inline h-3.5 w-2" aria-hidden="true">
                        <path d="M0 14 8 0" stroke="#808080" strokeWidth="1.500" />
                      </svg>
                    )}
                  </th>
                ))}
              </tr>
            </thead>
            <tbody>
              <tr className="h-[41px] border-b-2 border-[#dcdcdc] bg-[#c8c8c8] text-[23px] font-semibold">
                <td colSpan={11} className="p-0 whitespace-nowrap">
                  <div className="flex items-center leading-8">
                    <svg viewBox="0 0 16 16" className="mt-1 mr-[15px] ml-3 size-4" aria-hidden="true">
                      <circle cx="8" cy="8" r="6.500" fill="#d8d8d8" stroke="#8a8a8a" strokeWidth="2" />
                      <path d="M5 11l6-6" stroke="#8a8a8a" strokeWidth="2" />
                    </svg>
                    <span className="mr-4">Saldo: 1 000 000.00 USD</span>
                    <span className="mr-4">Controvalore: 1 000 000.00</span>
                    <span>Margine disponibile: 1 000 000.00</span>
                  </div>
                </td>
                <td className="p-0 pr-2 text-right leading-8">0.00</td>
              </tr>
            </tbody>
          </table>
          <div className="h-[99px]" />
        </div>
        <div role="tablist" className="mr-2 flex h-11 border-t-2 border-b-2 border-t-black border-b-white pl-1">
          <ActiveTab className="w-[206px]">Posizioni aperte</ActiveTab>
          {terminalTabs.map((t) => (
            <IdleTab key={t.name} name={t.name} count={t.count} className={t.width} />
          ))}
        </div>
      </div>
    </section>
  );
}

function StatusBar() {
  const cells = ["w-[204px]", "w-[142px]", "w-[142px]", "w-[136px]", "w-[140px]", "w-[131px]"];
  return (
    <footer className="flex h-11 shrink-0 border-t-2 border-white pt-1.5">
      <span className="flex-1 leading-9">Opzioni, Ctrl+O</span>
      <span className="w-[232px] border-l-2 border-[#a0a0a0] pl-2.5 leading-9">Default</span>
      {cells.map((c, i) => (
        <span key={i} className={`border-l-2 border-[#a0a0a0] ${c}`} />
      ))}
      <span className="flex w-[260px] items-center gap-2 border-l-2 border-[#a0a0a0] pl-2.5">
        <svg viewBox="0 0 46 28" className="h-7 w-[46px]" aria-hidden="true">
          {[0, 1, 2, 3, 4, 5, 6, 7].map((i) => (
            <g key={i}>
              <rect x={i * 6} y="0" width="4" height={18 - i * 2} fill="#5d7a1e" />
              <rect x={i * 6} y={20 - i * 2} width="4" height={8 + i * 2} fill="#14304f" />
            </g>
          ))}
        </svg>
        934/8 kb
      </span>
    </footer>
  );
}

export default function App() {
  return (
    <div className="flex h-screen flex-col overflow-hidden bg-[#f0f0f0] font-['Noto_Sans',sans-serif] text-[22px] text-black">
      <Gradients />
      <TitleBar />
      <MenuBar />
      <Toolbars />
      <div className="flex min-h-0 flex-1 border-t-2 border-b-2 border-[#a0a0a0]">
        <aside className="flex w-[578px] shrink-0 flex-col border-t-2 border-r-[3px] border-t-white border-r-[#7c7c7c]">
          <MarketWatch />
          <Navigator />
        </aside>
        <main className="mr-1 flex-1 border-t-2 border-[#6e6e6e] bg-[#ababab]" />
      </div>
      <Terminal />
      <StatusBar />
    </div>
  );
}
